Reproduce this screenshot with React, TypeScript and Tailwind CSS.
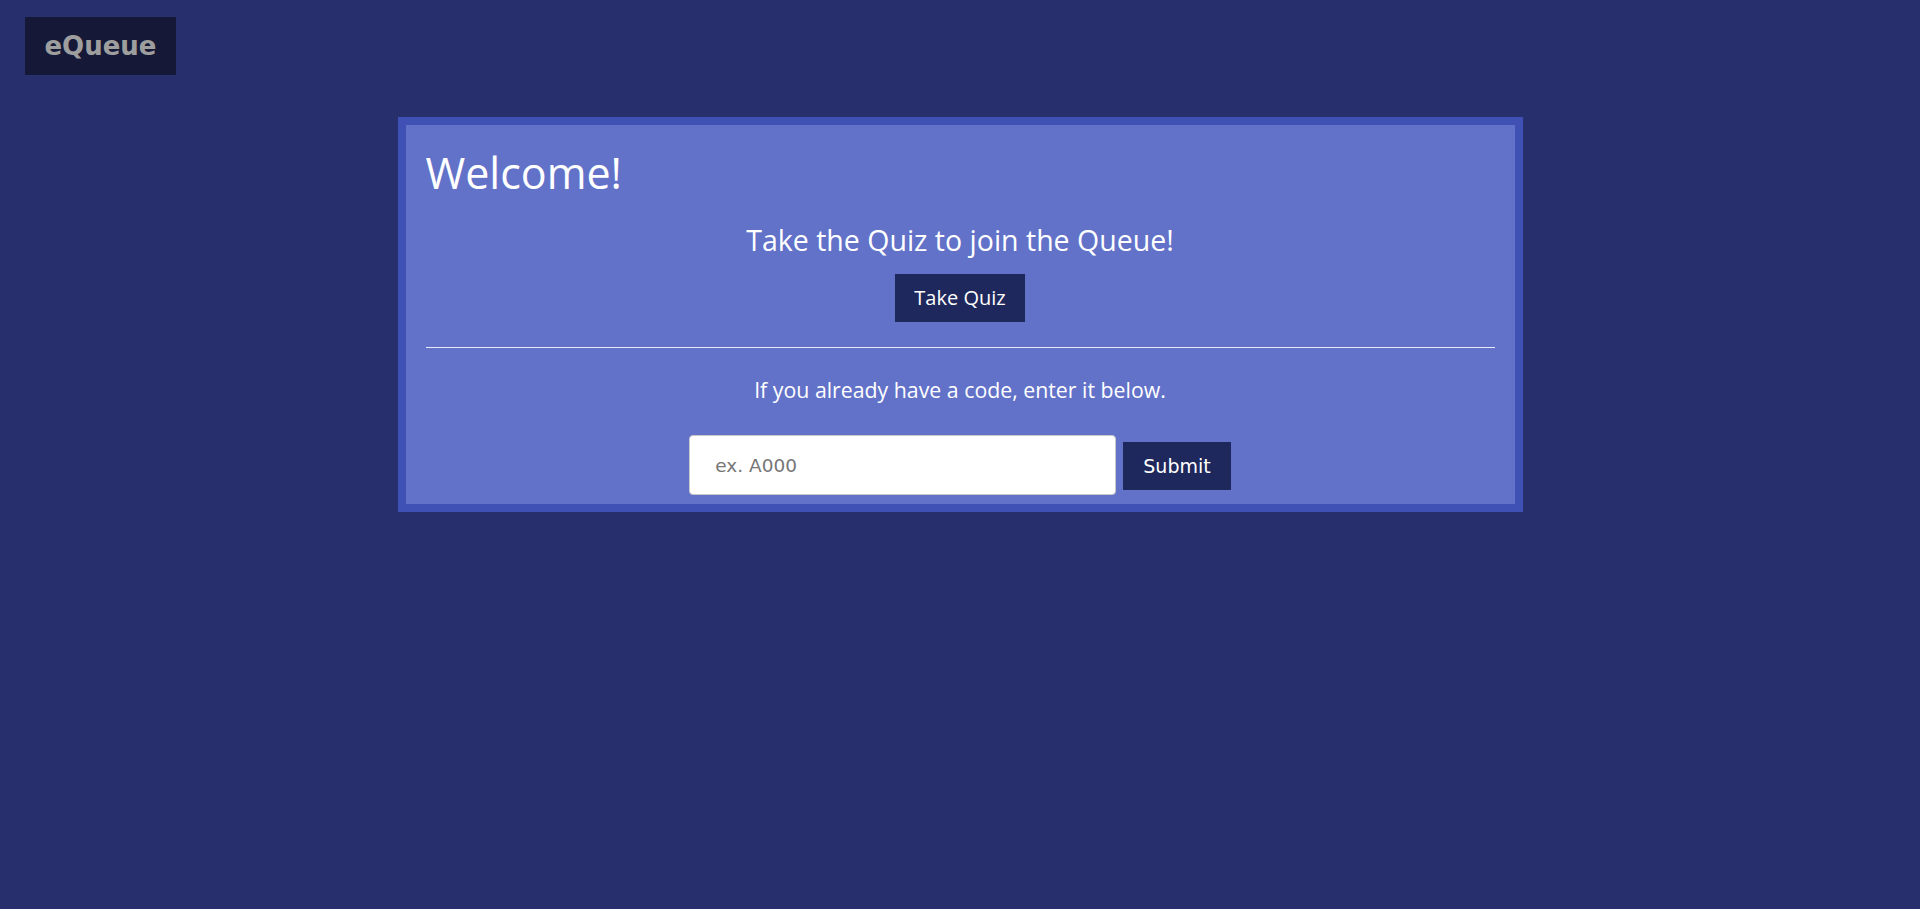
import { useState } from 'react'

export default function App() {
  const [code, setCode] = useState('')

  return (
    <div className="min-h-screen w-full bg-[#27306d] pt-[17px] font-['Open_Sans',sans-serif]">
      {/* Brand */}
      <div className="ml-[25px] flex h-[58px] w-[151px] items-center justify-center bg-[#151937]">
        <span className="font-['DejaVu_Sans',Verdana,sans-serif] text-[26px] font-bold text-[#9e9e9e]">
          eQueue
        </span>
      </div>

      {/* Welcome card */}
      <div className="mx-auto mt-[42px] w-[1125px] border-[8px] border-[#3f51b5] bg-[#6272c8] px-5 pb-[9px] pt-5 text-white">
        <h1 className="text-[43px] leading-[56px]">Welcome!</h1>

        <div className="mt-[19px] flex flex-col items-center">
          <h3 className="text-[28.5px] leading-[40px]">Take the Quiz to join the Queue!</h3>
          <button className="mt-[14px] flex h-[48px] items-center bg-[#1f285c] px-[19px] text-[20px]">
            Take Quiz
          </button>
        </div>

        <hr className="mt-[25px] border-0 border-t border-[#e8eaf6]" />

        <p className="mt-[27px] text-center text-[21.3px] leading-[30px]">
          If you already have a code, enter it below.
        </p>

        <div className="mt-[30px] flex items-center justify-center gap-[7px]">
          <input
            value={code}
            onChange={(e) => setCode(e.target.value)}
            placeholder="ex. A000"
            className="h-[60px] w-[427px] rounded-[4px] border border-[#c8c8c8] bg-white pl-[25px] font-['DejaVu_Sans',Verdana,sans-serif] text-[18.5px] text-[#333] outline-none placeholder:text-[#767676]"
          />
          <button className="mt-[2px] flex h-[48px] items-center bg-[#1f285c] px-5 font-['DejaVu_Sans',Verdana,sans-serif] text-[19px] text-white">
            Submit
          </button>
        </div>
      </div>
    </div>
  )
}
